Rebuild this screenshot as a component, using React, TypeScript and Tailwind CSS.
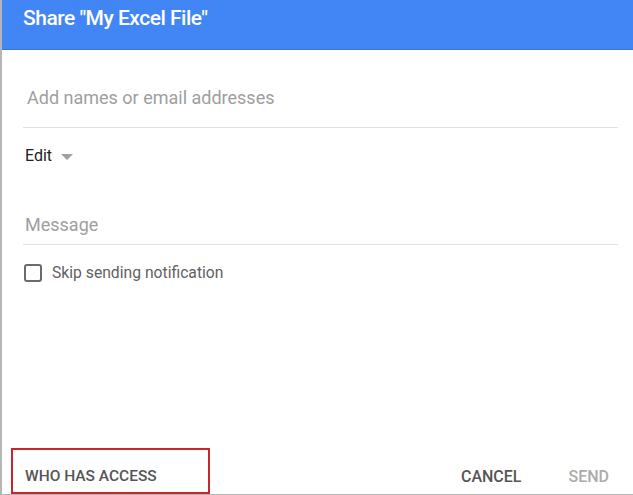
export default function App() {
  return (
    <div className="w-[633px] h-[495px] flex flex-col bg-white border-l-2 border-b border-[#b5b5b5] font-['Roboto',sans-serif] overflow-hidden">
      {/* Header */}
      <div className="h-[50px] shrink-0 bg-[#4285f4] border-b border-[#3b74d6] flex items-center px-[21px]">
        <h1 className="text-white text-[21px] font-medium leading-none tracking-[-0.5px] -mt-[13px]">
          Share "My Excel File"
        </h1>
      </div>

      <div className="px-[21px]">
        {/* People input */}
        <div className="pt-[36px] pb-[17px] border-b border-[#e0e0e0] pl-[4px] w-[595px]">
          <span className="block text-[18px] leading-[24px] text-[#9e9e9e]">Add names or email addresses</span>
        </div>

        {/* Permission */}
        <div className="mt-[18px] flex items-center gap-[9px] pl-[2px]">
          <span className="text-[16px] leading-[20px] text-[#212121]">Edit</span>
          <svg width="12" height="6" viewBox="0 0 12 6" className="mt-[1px]">
            <path d="M0 0 L12 0 L6 6 Z" fill="#a0a0a0" />
          </svg>
        </div>

        {/* Message */}
        <div className="mt-[47px] pb-[7px] border-b border-[#e0e0e0] pl-[2px] w-[595px]">
          <span className="block text-[18px] leading-[24px] text-[#9e9e9e]">Message</span>
        </div>

        {/* Notification checkbox */}
        <label className="mt-[18px] flex items-center gap-[10px] pl-[1px]">
          <span className="w-[18px] h-[18px] rounded-[3px] border-2 border-[#6b6b6b]" />
          <span className="text-[15.7px] leading-[20px] text-[#616161]">Skip sending notification</span>
        </label>
      </div>

      {/* Footer */}
      <div className="flex-1 flex items-end justify-between pl-[9px] pr-[24px]">
        <div className="h-[46px] w-[199px] border-2 border-[#c6262e] pl-[12px] pt-[16px]">
          <span className="block text-[15.5px] leading-[20px] font-medium text-[#555555]">WHO HAS ACCESS</span>
        </div>
        <div className="flex items-center gap-[47px] pb-[7px]">
          <span className="text-[16px] leading-[20px] font-medium text-[#555555]">CANCEL</span>
          <span className="text-[16px] leading-[20px] font-medium text-[#ababab]">SEND</span>
        </div>
      </div>
    </div>
  )
}
